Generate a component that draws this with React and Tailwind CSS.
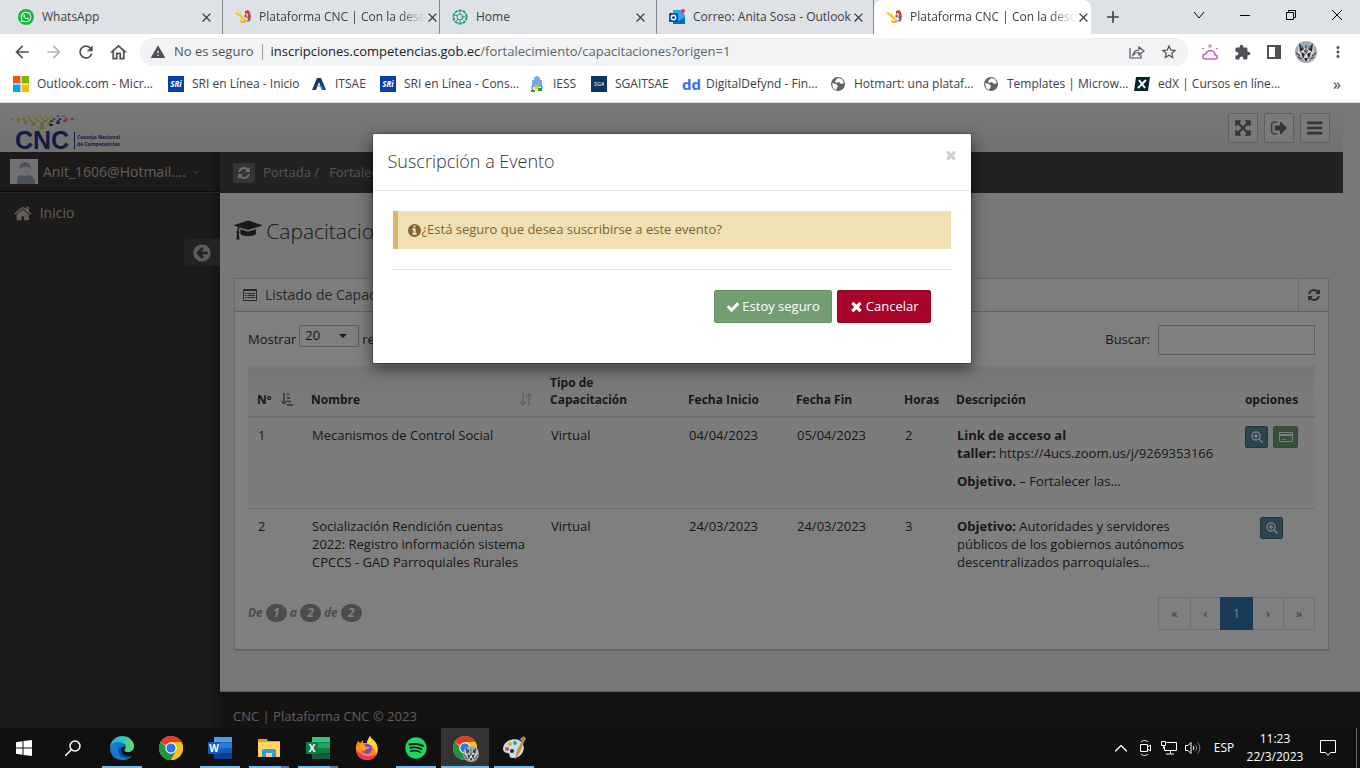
import { useState } from 'react';
import {
  MdArrowBack, MdArrowForward, MdRefresh, MdOutlineHome, MdWarning, MdStarBorder,
  MdExtension, MdMoreVert, MdClose, MdAdd,
} from 'react-icons/md';
import { FaWhatsapp, FaSpotify } from 'react-icons/fa';
import { FiChevronDown } from 'react-icons/fi';

// Font Awesome 4 glyphs, [viewBox width, path]
const FA = {
  refresh: [1536, 'M1511 1056q0 5-1 7-64 268-268 434.5t-478 166.5q-146 0-282.5-55t-243.5-157l-129 129q-19 19-45 19t-45-19-19-45v-448q0-26 19-45t45-19h448q26 0 45 19t19 45-19 45l-137 137q71 66 161 102t187 36q134 0 250-65t186-179q11-17 53-117 8-23 30-23h192q13 0 22.5 9.5t9.5 22.5zm25-800v448q0 26-19 45t-45 19h-448q-26 0-45-19t-19-45 19-45l138-138q-148-137-349-137-134 0-250 65t-186 179q-11 17-53 117-8 23-30 23h-199q-13 0-22.5-9.5t-9.5-22.5v-7q65-268 270-434.5t480-166.5q146 0 284 55.5t245 156.5l130-129q19-19 45-19t45 19 19 45z'],
  home: [1664, 'M1408 992v480q0 26-19 45t-45 19h-384v-384h-256v384h-384q-26 0-45-19t-19-45v-480q0-1 .5-3t.5-3l575-474 575 474q1 2 1 6zm223-69l-62 74q-8 9-21 11h-3q-13 0-21-7l-692-577-692 577q-12 8-24 7-13-2-21-11l-62-74q-8-10-7-23.5t11-21.5l719-599q32-26 76-26t76 26l244 204v-195q0-14 9-23t23-9h192q14 0 23 9t9 23v408l219 182q10 8 11 21.5t-7 23.5z'],
  expand: [1792, 'M1411 541l-355 355 355 355 144-144q29-31 70-14 39 17 39 59v448q0 26-19 45t-45 19h-448q-42 0-59-40-17-39 14-69l144-144-355-355-355 355 144 144q31 30 14 69-17 40-59 40h-448q-26 0-45-19t-19-45v-448q0-42 40-59 39-17 69 14l144 144 355-355-355-355-144 144q-19 19-45 19-12 0-24-5-40-17-40-59v-448q0-26 19-45t45-19h448q42 0 59 40 17 39-14 69l-144 144 355 355 355-355-144-144q-31-30-14-69 17-40 59-40h448q26 0 45 19t19 45v448q0 42-39 59-13 5-25 5-26 0-45-19z'],
  signOut: [1664, 'M640 1440q0 4 1 20t.5 26.5-3 23.5-10 19.5-20.5 6.5h-320q-119 0-203.5-84.5t-84.5-203.5v-704q0-119 84.5-203.5t203.5-84.5h320q13 0 22.5 9.5t9.5 22.5q0 4 1 20t.5 26.5-3 23.5-10 19.5-20.5 6.5h-320q-66 0-113 47t-47 113v704q0 66 47 113t113 47h312l11.5 1 11.5 3 8 5.5 7 9 2 13.5zm928-544q0 26-19 45l-544 544q-19 19-45 19t-45-19-19-45v-288h-448q-26 0-45-19t-19-45v-384q0-26 19-45t45-19h448v-288q0-26 19-45t45-19 45 19l544 544q19 19 19 45z'],
  bars: [1536, 'M1536 1344v128q0 26-19 45t-45 19h-1408q-26 0-45-19t-19-45v-128q0-26 19-45t45-19h1408q26 0 45 19t19 45zm0-512v128q0 26-19 45t-45 19h-1408q-26 0-45-19t-19-45v-128q0-26 19-45t45-19h1408q26 0 45 19t19 45zm0-512v128q0 26-19 45t-45 19h-1408q-26 0-45-19t-19-45v-128q0-26 19-45t45-19h1408q26 0 45 19t19 45z'],
  circleLeft: [1792, 'M1408 960v-128q0-26-19-45t-45-19h-502l189-189q19-19 19-45t-19-45l-91-91q-18-18-45-18t-45 18l-362 362-91 91q-18 18-18 45t18 45l91 91 362 362q18 18 45 18t45-18l91-91q18-18 18-45t-18-45l-189-189h502q26 0 45-19t19-45zm256-64q0 209-103 385.5t-279.5 279.5-385.5 103-385.5-103-279.5-279.5-103-385.5 103-385.5 279.5-279.5 385.5-103 385.5 103 279.5 279.5 103 385.5z'],
  info: [1792, 'M1152 1376v-160q0-14-9-23t-23-9h-96v-512q0-14-9-23t-23-9h-320q-14 0-23 9t-9 23v160q0 14 9 23t23 9h96v320h-96q-14 0-23 9t-9 23v160q0 14 9 23t23 9h448q14 0 23-9t9-23zm-128-896v-160q0-14-9-23t-23-9h-192q-14 0-23 9t-9 23v160q0 14 9 23t23 9h192q14 0 23-9t9-23zm640 416q0 209-103 385.5t-279.5 279.5-385.5 103-385.5-103-279.5-279.5-103-385.5 103-385.5 279.5-279.5 385.5-103 385.5 103 279.5 279.5 103 385.5z'],
  check: [1792, 'M1671 566q0 40-28 68l-724 724-136 136q-28 28-68 28t-68-28l-136-136-362-362q-28-28-28-68t28-68l136-136q28-28 68-28t68 28l294 295 656-657q28-28 68-28t68 28l136 136q28 28 28 68z'],
  times: [1792, 'M1490 1322q0 40-28 68l-136 136q-28 28-68 28t-68-28l-294-294-294 294q-28 28-68 28t-68-28l-136-136q-28-28-28-68t28-68l294-294-294-294q-28-28-28-68t28-68l136-136q28-28 68-28t68 28l294 294 294-294q28-28 68-28t68 28l136 136q28 28 28 68t-28 68l-294 294 294 294q28 28 28 68z'],
  cap: [2304, 'M1774 836l18 316q4 69-82 128t-235 93.5-323 34.5-323-34.5-235-93.5-82-128l18-316 574 181q22 7 48 7t48-7zm530-324q0 23-22 31l-1120 352q-4 1-10 1t-10-1l-652-206q-43 34-71 111.5t-34 178.5q63 36 63 109 0 69-58 107l58 433q2 14-8 25-9 11-24 11h-192q-15 0-24-11-10-11-8-25l58-433q-58-38-58-107 0-73 65-111 11-207 98-330l-333-104q-22-8-22-31t22-31l1120-352q4-1 10-1t10 1l1120 352q22 8 22 31z'],
};

function Fa({ name, className }) {
  const [w, d] = FA[name];
  return (
    <svg viewBox={`0 0 ${w} 1792`} className={`shrink-0 ${className}`} fill="currentColor" aria-hidden="true">
      <path d={d} />
    </svg>
  );
}

/* ---------- browser ---------- */

const CncMark = () => (
  <svg viewBox="0 0 16 16" className="size-4 shrink-0">
    <path d="M0 4l3-1 1 2 2-1 1 3 3 2-1 2-3-1-2-3-2-1z" fill="#f6c928" />
    <path d="M10 2l3-1 2 2 1 5-2 2-2-1 1-3-1-2-2 1z" fill="#d83a34" />
    <path d="M5 11l3 1 3-2 1 2-2 2-4 0z" fill="#f0b323" />
    <path d="M9 7l2-2 1 2-1 2zM13 10l3-2-1 4-3 1z" fill="#3f6fc4" />
  </svg>
);

const WhatsMark = () => (
  <span className="grid size-4 shrink-0 place-items-center rounded-full bg-[#14b83f] text-white">
    <FaWhatsapp size={12} />
  </span>
);

const HomeMark = () => (
  <svg viewBox="0 0 16 16" className="size-4 shrink-0" fill="none" stroke="#1f9a8c">
    <circle cx="8" cy="8" r="6.6" strokeWidth="1.8" strokeDasharray="3.4 .8" />
    <circle cx="8" cy="8" r="3" />
    <path d="M8 2v3M3 6l3 1M4 12l2-2M9 8h4M8 11v3" />
  </svg>
);

const OutlookMark = () => (
  <svg viewBox="0 0 16 16" className="size-4 shrink-0">
    <path d="M4 1h9l3 6v8H4z" fill="#28a8ea" />
    <path d="M4 8l6 4 6-4v7H4z" fill="#0f6cbd" />
    <rect y="4" width="9" height="9" rx="1" fill="#0a4f9c" />
    <circle cx="4.5" cy="8.5" r="2.2" fill="none" stroke="#fff" strokeWidth="1.4" />
    <circle cx="14" cy="2" r="2" fill="#e53935" />
  </svg>
);

const TABS = [
  { title: 'WhatsApp', icon: <WhatsMark /> },
  { title: 'Plataforma CNC | Con la desc', icon: <CncMark />, fade: true },
  { title: 'Home', icon: <HomeMark /> },
  { title: 'Correo: Anita Sosa - Outlook', icon: <OutlookMark /> },
  { title: 'Plataforma CNC | Con la desc', icon: <CncMark />, fade: true, active: true },
];

function Tab({ title, icon, active, fade }) {
  return (
    <div
      className={`flex w-[217px] items-center pr-2 pl-3 ${
        active ? 'rounded-t-lg bg-white' : 'border-r border-[#85888d]'
      }`}
    >
      {icon}
      <span
        className={`flex-1 pl-2 whitespace-nowrap ${
          fade ? '[mask-image:linear-gradient(to_right,#000_85%,transparent)]' : ''
        }`}
      >
        {title}
      </span>
      <button aria-label="Cerrar pestaña"><MdClose size={15} className="text-[#3c4043]" /></button>
    </div>
  );
}

const MsMark = () => (
  <svg viewBox="0 0 15 15" className="size-4">
    <path d="M0 0h7v7H0z" fill="#f25022" /><path d="M8 0h7v7H8z" fill="#7fba00" />
    <path d="M0 8h7v7H0z" fill="#00a4ef" /><path d="M8 8h7v7H8z" fill="#ffb900" />
  </svg>
);
const SriMark = () => (
  <span className="grid size-4 place-items-center bg-[#0a3fa8] text-[8px] font-bold text-white italic">SRi</span>
);
const ItsMark = () => (
  <svg viewBox="0 0 16 16" className="size-4">
    <path d="M6 2h4l5 12h-4L8 6 5 14H1z" fill="#123a63" /><path d="M6 9l5 1 3 4-5-3z" fill="#2d8ea8" />
  </svg>
);
const IessMark = () => (
  <svg viewBox="0 0 16 16" className="size-4">
    <path d="M4 11V4M6 11V1M8 11V0M10 11V1M12 11V4" stroke="#1a73c9" strokeWidth="1.2" />
    <path d="M3 10v3l3 2M13 10v3" fill="none" stroke="#1a73c9" />
    <path d="M5 11l3-2 2 2-3 4z" fill="#f5c518" /><path d="M9 12h4v3H9zM2 14h4v2H2z" fill="#2c9b45" />
  </svg>
);
const SgaMark = () => (
  <span className="grid size-4 place-items-center bg-[#0e3560] text-[6px] text-white italic">SGA</span>
);
const DdMark = () => <span className="text-[15px] leading-4 font-bold text-[#2f6bff]">dd</span>;
const GlobeMark = () => (
  <svg viewBox="0 0 16 16" className="size-4">
    <circle cx="8" cy="8" r="7" fill="#5f6368" />
    <path d="M2 7l4 1 2 2-2 4-3-2zM8 2l4 1 2 4-3 1-2-2-3 1-1-2z" fill="#fff" />
  </svg>
);
const EdxMark = () => (
  <svg viewBox="0 0 16 16" className="size-4">
    <path d="M2 1h14l-2 14H0z" fill="#00262b" />
    <path d="M5 4l6 8M12 4l-8 8" stroke="#fff" strokeWidth="2" />
  </svg>
);

const BOOKMARKS = [
  ['Outlook.com - Micr...', <MsMark />, 'w-[155px]'],
  ['SRI en Línea - Inicio', <SriMark />, 'w-[143px]'],
  ['ITSAE', <ItsMark />, 'w-[69px]'],
  ['SRI en Línea - Cons...', <SriMark />, 'w-[149px]'],
  ['IESS', <IessMark />, 'w-[62px]'],
  ['SGAITSAE', <SgaMark />, 'w-[91px]'],
  ['DigitalDefynd - Fin...', <DdMark />, 'w-[148px]'],
  ['Hotmart: una plataf...', <GlobeMark />, 'w-[153px]'],
  ['Templates | Microw...', <GlobeMark />, 'w-[151px]'],
  ['edX | Cursos en líne...', <EdxMark />, 'w-[150px]'],
];

// face of the profile picture, also stamped on the taskbar's Chrome icon
const Wolf = ({ className }) => (
  <svg viewBox="0 0 22 22" className={className}>
    <circle cx="11" cy="11" r="11" fill="#a9a6b0" />
    <path d="M4 2l5 5h4l5-5 1 9-4 6-4 4-4-4-4-6z" fill="#d9d9e0" />
    <path d="M4 2l5 6-4 3zM18 2l-5 6 4 3zM6 11l4 2-2 5zM16 11l-4 2 2 5zM9 17h4l-2 4z" fill="#26262c" />
    <path d="M6 5l2 2M16 5l-2 2" stroke="#2e75b6" strokeWidth="2" />
    <path d="M11 4v9M1 12l4 3M21 12l-4 3M3 16l4 2M19 16l-4 2M9 9l2 3 2-3" fill="none" stroke="#4a4a52" strokeWidth="1.2" />
  </svg>
);

function Browser() {
  return (
    <header className="shrink-0 font-['Open_Sans',sans-serif] text-xs text-[#3c4043]">
      <div className="flex h-[34px] bg-[#dee1e6] pl-[6px]">
        {TABS.map((t, i) => <Tab key={i} {...t} />)}
        <button aria-label="Nueva pestaña" className="ml-3"><MdAdd size={20} /></button>
        <div className="ml-auto flex items-center pb-1 text-black">
          <button aria-label="Buscar pestañas" className="grid w-[46px] place-items-center">
            <svg viewBox="0 0 12 12" className="size-3" fill="none" stroke="currentColor"><path d="M1 3l5 6 5-6" /></svg>
          </button>
          <button aria-label="Minimizar" className="grid w-[46px] place-items-center">
            <svg viewBox="0 0 10 10" className="size-[10px]" stroke="currentColor"><path d="M0 5.500h10" /></svg>
          </button>
          <button aria-label="Restaurar" className="grid w-[46px] place-items-center">
            <svg viewBox="0 0 10 10" className="size-[10px]" fill="none" stroke="currentColor"><path d="M.5 2.500h7v7h-7zM2.500 2.500v-2h7v7h-2" /></svg>
          </button>
          <button aria-label="Cerrar" className="grid w-[46px] place-items-center">
            <svg viewBox="0 0 10 10" className="size-[10px]" stroke="currentColor"><path d="M0 0l10 10M10 0L0 10" /></svg>
          </button>
        </div>
      </div>

      <div className="flex h-9 items-center bg-white pr-[6px] pl-3 text-[#4d5156]">
        <div className="flex w-32 items-center gap-3">
          <button aria-label="Atrás"><MdArrowBack size={20} /></button>
          <button aria-label="Adelante"><MdArrowForward size={20} className="text-[#b5b7ba]" /></button>
          <button aria-label="Recargar"><MdRefresh size={20} /></button>
          <button aria-label="Inicio"><MdOutlineHome size={21} /></button>
        </div>
        <div className="flex h-7 flex-1 items-center rounded-full bg-[#f1f3f4] px-[10px] text-[13px]">
          <MdWarning size={16} />
          <span className="pl-2">No es seguro</span>
          <span className="mx-2 h-4 w-px bg-[#9aa0a6]" />
          <span className="text-[#202124]">inscripciones.competencias.gob.ec</span>
          <span className="flex-1 text-[#5f6368]">/fortalecimiento/capacitaciones?origen=1</span>
          <button aria-label="Compartir" className="mr-[15px]">
            <svg viewBox="0 0 16 16" className="size-4" fill="none" stroke="currentColor" strokeWidth="1.2">
              <path d="M1 4v10h11v-3M4 11c1-4 3-5 6-5V3l5 4-5 4V8.500c-3 0-4 .5-6 2.500z" />
            </svg>
          </button>
          <button aria-label="Favorito"><MdStarBorder size={18} /></button>
        </div>
        <div className="ml-[6px] grid grid-cols-[repeat(5,32px)] place-items-center">
          <svg viewBox="0 0 18 18" className="size-[18px]" fill="none" strokeWidth="1.6">
            <path d="M4 16h10c3 0 3-4 0-4 0-5-8-6-9-1-4 0-4 5-1 5z" stroke="#d65bd0" />
            <circle cx="9" cy="3" r="1" stroke="#e58ab8" /><path d="M2 5v1M16 5v1" stroke="#e56f8b" strokeWidth="2" />
          </svg>
          <MdExtension size={17} />
          <svg viewBox="0 0 14 14" className="size-[14px]"><path d="M1 1h12v12H1z" fill="none" stroke="currentColor" strokeWidth="2" /><path d="M8 1h5v12H8z" fill="currentColor" /></svg>
          <Wolf className="size-[22px]" />
          <button aria-label="Menú"><MdMoreVert size={18} /></button>
        </div>
      </div>

      <nav className="flex h-[33px] items-center border-b border-[#dcdcdc] bg-white pr-[19px] pb-1 pl-[13px]">
        {BOOKMARKS.map(([label, icon, width], i) => (
          <a key={i} href="#" className={`flex shrink-0 items-center gap-2 whitespace-nowrap ${width}`}>
            <span className="grid w-4 shrink-0 place-items-center">{icon}</span>
            {label}
          </a>
        ))}
        <span className="ml-auto text-base leading-4">»</span>
      </nav>
    </header>
  );
}

/* ---------- site ---------- */

// rows of the dotted fan above the letters: from x, to x, y, count
const DOTS = [
  [17, 53, 3, 7], [1, 61, 6, 11], [7, 54, 8, 8], [15, 47, 10, 5], [22, 40, 12, 3], [31, 31, 15, 1],
];

function Logo() {
  return (
    <svg viewBox="0 0 120 37" className="h-[37px] w-[120px]" role="img" aria-label="CNC">
      {DOTS.map(([x0, x1, y, n], row) =>
        Array.from({ length: n }, (_, i) => (
          <ellipse
            key={`${row}-${i}`}
            cx={n > 1 ? x0 + ((x1 - x0) * i) / (n - 1) : x0}
            cy={y}
            rx={1.4 + row * 0.25}
            ry={0.6 + row * 0.12}
            fill={row < 3 && i > n * 0.75 ? '#c8302c' : i > n * 0.6 ? '#2b3f9a' : '#e0c820'}
          />
        )),
      )}
      <text x="4" y="36" fontSize="25" fontWeight="700" fontFamily="Liberation Sans, sans-serif" fill="#26358c">CNC</text>
      <path d="M63.500 19v17" stroke="#26358c" />
      <text x="66" y="26" fontSize="5" fontWeight="700" fontFamily="Open Sans, sans-serif" fill="#26358c">Consejo Nacional</text>
      <text x="66" y="33" fontSize="5" fontWeight="700" fontFamily="Open Sans, sans-serif" fill="#26358c">de Competencias</text>
    </svg>
  );
}

function HeaderButton({ icon, label }) {
  return (
    <button
      aria-label={label}
      className="grid size-[30px] place-items-center rounded-xs border border-[#bfbfbf] bg-linear-to-b from-[#f8f8f8] to-[#f1f1f1] text-[#6d6a69]"
    >
      <Fa name={icon} className="h-[18px]" />
    </button>
  );
}

const ZoomIcon = () => (
  <svg viewBox="0 0 12 12" className="size-3" fill="none" stroke="currentColor" strokeWidth="1.5">
    <circle cx="5" cy="5" r="4" /><path d="M8 8l4 4M3 5h4M5 3v4" />
  </svg>
);
const CardIcon = () => (
  <svg viewBox="0 0 14 12" className="h-3 w-[14px]" fill="none" stroke="currentColor">
    <path d="M.5 1.500h13v9H.5z" /><path d="M1 4h12" strokeWidth="2" /><path d="M2 8.500h1M4 8.500h3" />
  </svg>
);
const ListIcon = () => (
  <svg viewBox="0 0 14 12" className="h-3 w-[14px]" fill="none" stroke="currentColor">
    <path d="M.5.500h13v11H.5z" /><path d="M1 1.500h12M2 4.500h1.500M2 6.500h1.500M2 8.500h1.500M4.500 4.500h7.500M4.500 6.500h7.500M4.500 8.500h7.500" />
  </svg>
);
const SortAsc = () => (
  <svg viewBox="0 0 12 13" className="h-[13px] w-3 text-[#888]" fill="none" stroke="currentColor" strokeWidth="2">
    <path d="M3 0v11M6 1.500h2M6 5h3M6 8.500h4M6 12h6" /><path d="M0 8l3 3 3-3" strokeWidth="1.5" />
  </svg>
);
const SortBoth = () => (
  <svg viewBox="0 0 12 13" className="h-[13px] w-3 text-[#c5c5c5]" fill="none" stroke="currentColor" strokeWidth="1.5">
    <path d="M3 0v12M0 9l3 3 3-3M9 13V1M6 4l3-3 3 3" />
  </svg>
);

const COLUMNS = [
  ['Nº', 'w-[54px]', <SortAsc />],
  ['Nombre', 'w-[239px]', <SortBoth />],
  ['Tipo de Capacitación', 'w-[138px]'],
  ['Fecha Inicio', 'w-[108px]'],
  ['Fecha Fin', 'w-[108px]'],
  ['Horas', 'w-[52px]'],
  ['Descripción', ''],
  ['opciones', 'w-[87px] text-center'],
];

const ROWS = [
  {
    n: 1,
    nombre: 'Mecanismos de Control Social',
    inicio: '04/04/2023',
    fin: '05/04/2023',
    horas: 2,
    desc: (
      <>
        <p className="mb-[10px]"><b>Link de acceso al<br />taller:</b> https://4ucs.zoom.us/j/9269353166</p>
        <p className="mb-[10px]"><b>Objetivo.</b> – Fortalecer las...</p>
      </>
    ),
    suscribir: true,
  },
  {
    n: 2,
    nombre: 'Socialización Rendición cuentas 2022: Registro información sistema CPCCS - GAD Parroquiales Rurales',
    inicio: '24/03/2023',
    fin: '24/03/2023',
    horas: 3,
    desc: <p className="w-[232px]"><b>Objetivo:</b> Autoridades y servidores públicos de los gobiernos autónomos descentralizados parroquiales...</p>,
  },
];

function EventsTable() {
  return (
    <table className="w-full table-fixed text-left">
      <thead>
        <tr className="border-b-2 border-[#ddd] bg-linear-to-b from-[#eee] to-[#fafafa] text-xs">
          {COLUMNS.map(([label, cls, sort]) => (
            <th key={label} className={`px-[9px] py-2 align-bottom leading-[17px] font-bold ${cls}`}>
              {sort ? <span className="flex items-center justify-between">{label}{sort}</span> : label}
            </th>
          ))}
        </tr>
      </thead>
      <tbody>
        {ROWS.map((r) => (
          <tr key={r.n} className="border-b border-[#ddd] align-top leading-[18px] odd:bg-[#f9f9f9] last:border-0">
            <td className="px-[10px] py-2">{r.n}</td>
            <td className="px-[10px] py-2">{r.nombre}</td>
            <td className="px-[10px] py-2">Virtual</td>
            <td className="px-[10px] py-2">{r.inicio}</td>
            <td className="px-[10px] py-2">{r.fin}</td>
            <td className="px-[10px] py-2">{r.horas}</td>
            <td className="px-[10px] py-2">{r.desc}</td>
            <td className="py-2">
              <div className="flex justify-center gap-[5px] text-white">
                <button aria-label="Ver" className="grid h-[22px] w-[23px] place-items-center rounded-xs border border-[#456b7b] bg-[#57889c]"><ZoomIcon /></button>
                {r.suscribir && (
                  <button aria-label="Suscribirse" className="grid h-[22px] w-[25px] place-items-center rounded-xs border border-[#659265] bg-[#739e73]"><CardIcon /></button>
                )}
              </div>
            </td>
          </tr>
        ))}
      </tbody>
    </table>
  );
}

const Badge = ({ children }) => (
  <span className="inline-grid h-[18px] w-[21px] place-items-center rounded-full bg-[#999] text-white">{children}</span>
);

function Widget() {
  return (
    <section className="border border-b-2 border-[#ccc] bg-white">
      <header className="flex h-[33px] items-center border-b border-[#c2c2c2] bg-[#fafafa] pl-2 text-[#555]">
        <ListIcon />
        <h2 className="flex-1 pl-2 text-sm">Listado de Capacitaciones</h2>
        <button aria-label="Recargar" className="grid h-full w-[30px] place-items-center border-l border-[#d5d5d5]">
          <Fa name="refresh" className="h-[14px]" />
        </button>
      </header>
      <div className="px-[13px] pt-[13px] pb-[19px]">
        <div className="flex items-start justify-between">
          <label className="flex items-center gap-[3px] pt-[5px]">
            Mostrar
            <span className="relative -mt-2">
              <select defaultValue="20" className="h-[22px] w-[60px] appearance-none border border-[#bdbdbd] bg-white pl-[5px] text-[13px]">
                <option>20</option>
              </select>
              <span className="pointer-events-none absolute top-[9px] right-3 border-x-4 border-t-4 border-x-transparent border-t-[#333]" />
            </span>
            registros
          </label>
          <label className="flex items-center gap-2">
            Buscar:
            <input type="search" className="h-[30px] w-[157px] border border-[#bdbdbd] bg-white px-2" />
          </label>
        </div>
        <div className="mt-[11px]"><EventsTable /></div>
        <div className="flex items-start justify-between pt-[18px]">
          <p className="flex items-center gap-[3px] pt-[7px] text-xs font-bold text-[#999] italic">
            De <Badge>1</Badge> a <Badge>2</Badge> de <Badge>2</Badge>
          </p>
          <div className="flex h-[33px] text-[13px] text-[#777]">
            <button className="w-[33px] border border-[#ddd]">«</button>
            <button className="w-[29px] border-y border-[#ddd]">‹</button>
            <button className="w-[33px] bg-[#3276b1] text-white">1</button>
            <button className="w-[30px] border-y border-[#ddd]">›</button>
            <button className="w-[32px] border border-[#ddd]">»</button>
          </div>
        </div>
      </div>
    </section>
  );
}

function Sidebar() {
  return (
    <aside className="w-[220px] shrink-0 bg-linear-to-r from-[#3a3734] from-94% to-[#2b2927] text-[#c0bbb7]">
      <button className="flex h-10 w-full items-center gap-[5px] border-b border-[#151515] pl-[10px] text-sm shadow-[0_1px_0_#525151]">
        <svg viewBox="0 0 28 25" className="h-[25px] w-7 shrink-0">
          <path d="M0 0h28v25H0z" fill="#e4e4e4" />
          <path d="M7 25c0-10 2-9 8-9s10 0 10 9z" fill="#9aa3b5" />
          <circle cx="15" cy="11" r="6" fill="#dcdfe6" /><path d="M9 10c0-9 12-9 12 0-3-3-9-3-12 0z" fill="#99a2b8" />
        </svg>
        <span>Anit_1606@Hotmail....</span>
        <FiChevronDown size={10} />
      </button>
      <a href="#" className="flex items-center gap-2 py-[11px] pl-[14px] text-sm">
        <Fa name="home" className="h-[19px]" />
        Inicio
      </a>
      <button aria-label="Contraer menú" className="mt-[5px] ml-auto grid h-[27px] w-9 place-items-center rounded-l-sm bg-[#484644] text-[#bbb]">
        <Fa name="circleLeft" className="h-5" />
      </button>
    </aside>
  );
}

function Site() {
  return (
    <div className="flex h-full flex-col bg-[#f0f0f0] text-[13px] text-[#333]">
      <header className="mr-[17px] flex h-[49px] shrink-0 items-start justify-between bg-linear-to-b from-[#f3f3f3] to-[#e2e2e2] pt-[10px] pr-[13px] pl-[11px]">
        <Logo />
        <div className="flex gap-[6px]">
          <HeaderButton icon="expand" label="Pantalla completa" />
          <HeaderButton icon="signOut" label="Salir" />
          <HeaderButton icon="bars" label="Menú" />
        </div>
      </header>
      <div className="flex min-h-0 flex-1">
        <Sidebar />
        <main className="flex min-w-0 flex-1 flex-col">
          <div className="mr-[17px] flex h-[41px] shrink-0 items-center gap-2 bg-[#454545] pl-[13px] text-[#bfbfbf]">
            <button aria-label="Restablecer" className="grid h-5 w-[22px] place-items-center rounded-xs bg-[#6b6b6b] text-[#ddd]">
              <Fa name="refresh" className="h-[14px]" />
            </button>
            <nav className="flex gap-[10px] text-[#aaa]"><span>Portada /</span><span>Fortalecimiento</span></nav>
          </div>
          <div className="flex-1 pr-[31px] pl-[14px]">
            <h1 className="flex h-[85px] items-start gap-1 pt-6 text-[21px] leading-7 font-light">
              <Fa name="cap" className="mt-[2px] h-[22px]" />
              Capacitaciones
            </h1>
            <Widget />
          </div>
          <footer className="h-[37px] shrink-0 border-t border-[#bbb] bg-[#2a2725] pt-[15px] pl-[13px] text-[#bbb]">
            CNC | Plataforma CNC © 2023
          </footer>
        </main>
      </div>
    </div>
  );
}

function SubscribeModal({ onClose }) {
  return (
    <div className="absolute inset-0 flex items-start justify-center bg-black/50 pt-[30px] pr-[17px]">
      <div
        role="dialog"
        aria-labelledby="modal-title"
        className="w-[600px] rounded-xs border border-black/20 bg-white bg-clip-padding text-[13px] text-[#333] shadow-[0_5px_15px_rgba(0,0,0,0.5)]"
      >
        <div className="flex h-[57px] items-start justify-between border-b border-[#e5e5e5] pt-[14px] pr-[13px] pl-[15px]">
          <h4 id="modal-title" className="text-lg leading-[27px] font-light">Suscripción a Evento</h4>
          <button aria-label="Cerrar" onClick={onClose} className="text-[#ccc]"><Fa name="times" className="h-[14px]" /></button>
        </div>
        <div className="px-5 pt-5 pb-10">
          <p className="flex h-[38px] items-center border-l-5 border-[#dfb56c] bg-[#efe1b3] pl-[9px] text-[#826430]">
            <Fa name="info" className="h-[15px]" />
            ¿Está seguro que desea suscribirse a este evento?
          </p>
          <hr className="my-5 border-[#e5e5e5]" />
          <div className="flex justify-end gap-[5px] pr-5 text-white">
            <button onClick={onClose} className="flex h-[33px] items-center gap-[2px] rounded-xs border border-[#659265] bg-[#739e73] px-[11px]">
              <Fa name="check" className="h-[14px]" /> Estoy seguro
            </button>
            <button onClick={onClose} className="flex h-[33px] items-center gap-[2px] rounded-xs border border-[#900323] bg-[#a90329] px-[11px]">
              <Fa name="times" className="h-[15px]" /> Cancelar
            </button>
          </div>
        </div>
      </div>
    </div>
  );
}

/* ---------- taskbar ---------- */

const Chrome = () => (
  <svg viewBox="0 0 24 24" className="size-6">
    <circle cx="12" cy="12" r="12" fill="#fbc116" />
    <path d="M12 12L1.600 6A12 12 0 0 1 22.400 6H12z" fill="#e33b2e" />
    <path d="M1.600 6A12 12 0 0 0 12 24l5.200-9H12z" fill="#229342" />
    <path d="M22.400 6H12v6l5 3-5 9A12 12 0 0 0 22.400 6z" fill="#fbc116" />
    <circle cx="12" cy="12" r="5.7" fill="#fff" /><circle cx="12" cy="12" r="4.6" fill="#2f74e8" />
  </svg>
);
const Edge = () => (
  <svg viewBox="0 0 24 24" className="size-6">
    <defs>
      <linearGradient id="edge" x1="0" x2="1"><stop offset="0" stopColor="#2aa5e0" /><stop offset=".55" stopColor="#35c5c0" /><stop offset="1" stopColor="#6fdc5a" /></linearGradient>
    </defs>
    <path d="M0 11C1 4 6 0 12 0c7 0 12 5 12 10 0 4-3 6-6 6-4 0-4-2-3-3 2-4-1-6-5-6-5 0-8 2-10 4z" fill="url(#edge)" />
    <path d="M0 12c0-3 4-6 8-6 4 0 7 2 7 5-6-2-7 8 0 10 3 1 5 0 7-1-3 4-7 4-10 4C5 24 0 19 0 12z" fill="#0f7bd2" />
    <path d="M8 14c0 5 4 8 8 8 3 0 5-1 6-2-4 1-9 0-10-4-1-2 0-4 1-5-3-1-5 1-5 3z" fill="#104b93" />
  </svg>
);
const Office = ({ letter, colors }) => (
  <svg viewBox="0 0 24 22" className="h-[22px] w-6">
    {colors.slice(0, 4).map((c, i) => <path key={i} d={`M6 ${i * 5.5}h18v5.500H6z`} fill={c} />)}
    <rect y="5" width="12" height="12" rx="1" fill={colors[4]} />
    <text x="6" y="15" textAnchor="middle" fontSize="10" fontWeight="700" fontFamily="Open Sans, sans-serif" fill="#fff">{letter}</text>
  </svg>
);
const Explorer = () => (
  <svg viewBox="0 0 22 18" className="h-[18px] w-[22px]">
    <path d="M0 0h9l1 2h12v16H0z" fill="#e5a00d" /><path d="M0 3h22v15H0z" fill="#ffd566" />
    <path d="M4 18v-7l2-1h10l2 1v7h-4v-4H8v4z" fill="#3a96dd" />
  </svg>
);
const Firefox = () => (
  <svg viewBox="0 0 24 24" className="size-6">
    <path d="M3 5l2 2 3-3v3h4c0-3 2-5 3-7 1 3 4 4 6 7 4 7 1 17-9 17S-2 13 3 5z" fill="#ff8a16" />
    <path d="M15 0c1 3 4 4 6 7 2 4 2 8 0 12 0-8-4-9-9-12 0-3 2-5 3-7z" fill="#ffd43a" />
    <path d="M1 14c1 6 5 10 11 10 5 0 9-3 11-8-3 4-8 5-12 4S4 16 1 14z" fill="#f5315f" />
    <circle cx="12" cy="13" r="5" fill="#7a45d6" /><path d="M5 9c3-1 5 0 6 2h4c-2 3-5 1-5 4-3 0-5-2-5-6z" fill="#ff9f1c" />
  </svg>
);
const Paint = () => (
  <svg viewBox="0 0 24 24" className="size-6">
    <path d="M2 9C6 2 18 1 21 8c3 7-3 15-11 14-4-1-1-4-4-5-5 0-6-4-4-8z" fill="#c5dff0" />
    <circle cx="5" cy="13" r="2" fill="#d94b3d" /><circle cx="8" cy="8" r="2" fill="#e7a63a" />
    <circle cx="13" cy="7" r="2" fill="#57a545" /><circle cx="10" cy="15" r="2" fill="#1d2733" />
    <path d="M13 24l2-10 5-9 2 1-4 10z" fill="#e08a2e" /><path d="M18 3l4-3 2 3-3 4z" fill="#a98a62" />
  </svg>
);
const WinLogo = () => (
  <svg viewBox="0 0 16 16" className="size-4" fill="#fff"><path d="M0 2.200l6.500-1v6.300H0zM7.500 1L16 0v7.500H7.500zM0 8.500h6.500v6.300L0 13.800zM7.500 8.500H16V16l-8.500-1z" /></svg>
);
const SearchIcon = () => (
  <svg viewBox="0 0 16 16" className="size-4" fill="none" stroke="#fff" strokeWidth="1.5"><circle cx="10" cy="6" r="5" /><path d="M6.500 9.500L0 16" /></svg>
);

const APPS = [
  ['Inicio', <WinLogo />],
  ['Buscar', <SearchIcon />],
  ['Edge', <Edge />, 'open'],
  ['Chrome', <Chrome />],
  ['Word', <Office letter="W" colors={['#41a5ee', '#2b7cd3', '#185abd', '#103f91', '#185abd']} />, 'open'],
  ['Explorador', <Explorer />, 'multi'],
  ['Excel', <Office letter="X" colors={['#33c481', '#21a366', '#107c41', '#185c37', '#107c41']} />, 'multi'],
  ['Firefox', <Firefox />],
  ['Spotify', <FaSpotify size={22} color="#1ed760" />, 'open'],
  ['Chrome CNC', <span className="relative"><Chrome /><Wolf className="absolute top-[10px] left-[10px] size-4" /></span>, 'active'],
  ['Paint', <Paint />, 'open'],
];

function Taskbar() {
  return (
    <footer className="flex h-10 shrink-0 justify-between bg-[#101010] font-['Open_Sans',sans-serif] text-xs text-white">
      <div className="flex gap-px">
        {APPS.map(([label, icon, state]) => (
          <button
            key={label}
            aria-label={label}
            className={`flex w-12 flex-col items-center ${state === 'active' ? 'bg-[#333]' : ''}`}
          >
            <span className="grid flex-1 place-items-center pt-[2px]">{icon}</span>
            <span className={`flex h-[2px] ${state === 'active' ? 'w-full bg-[#76b9ed]' : state ? 'w-10 bg-[#76b9ed]' : ''}`}>
              {state === 'multi' && <span className="ml-auto w-2 bg-[#4f7fa6]" />}
            </span>
          </button>
        ))}
      </div>
      <div className="flex items-center">
        <svg viewBox="0 0 12 7" className="h-[7px] w-3" fill="none" stroke="#fff" strokeWidth="1.3"><path d="M0 6.500l6-6 6 6" /></svg>
        <svg viewBox="0 0 12 16" className="ml-3 h-4 w-3" fill="none" stroke="#fff">
          <path d="M1.500 4.500h7v7h-7zM8.500 7l3-2v6l-3-2M2 2c2-2 5-2 7 0M2 14c2 2 5 2 7 0" />
        </svg>
        <svg viewBox="0 0 16 14" className="ml-[10px] h-[14px] w-4" fill="none" stroke="#fff">
          <path d="M5.500 1.500h10v8h-12v-4M.5.500h4v4h-4zM9.500 9.500v3M5 13h8M2.500 4.500v3" />
        </svg>
        <svg viewBox="0 0 17 14" className="ml-2 h-[14px] w-[17px]" fill="none" stroke="#fff">
          <path d="M.5 4.500H3l3-3v11l-3-3H.500zM8 5c1 1 1 3 0 4" /><path d="M10 3.500c2 2 2 5 0 7M12.500 1.500c3 3 3 8 0 11" stroke="#888" />
        </svg>
        <span className="w-11 text-center">ESP</span>
        <time className="w-[58px] text-center leading-[18px] whitespace-nowrap">11:23<br />22/3/2023</time>
        <svg viewBox="0 0 16 16" className="ml-4 size-4" fill="none" stroke="#fff"><path d="M.5.500h15v12h-5l-2.500 3-2.500-3h-5z" /></svg>
        <span className="ml-[20px] h-10 w-1 border-l border-[#666]" />
      </div>
    </footer>
  );
}

export default function App() {
  const [open, setOpen] = useState(true);

  return (
    <div className="flex h-screen flex-col overflow-hidden font-['Open_Sans',sans-serif]">
      <Browser />
      <div className="relative min-h-0 flex-1">
        <Site />
        {open && <SubscribeModal onClose={() => setOpen(false)} />}
      </div>
      <Taskbar />
    </div>
  );
}
